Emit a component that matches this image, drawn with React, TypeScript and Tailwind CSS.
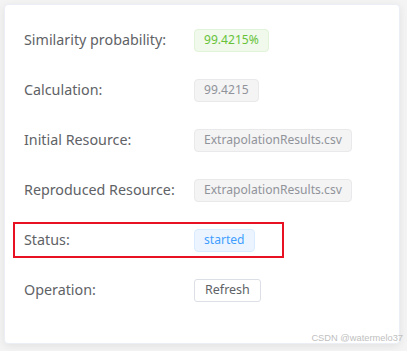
import React from "react";

type Tone = "success" | "info" | "primary";

const toneClass: Record<Tone, string> = {
  success: "bg-[#f0f9eb] border-[#e1f3d8] text-[#67c23a]",
  info: "bg-[#f4f4f5] border-[#e9e9eb] text-[#909399]",
  primary: "bg-[#ecf5ff] border-[#d9ecff] text-[#409eff]",
};

function Tag({ tone, children }: { tone: Tone; children: React.ReactNode }) {
  return (
    <span
      className={`inline-flex items-center h-[23px] px-[9px] rounded-[4px] border text-[12.1px] leading-none ${toneClass[tone]}`}
    >
      {children}
    </span>
  );
}

function Row({ label, children }: { label: string; children: React.ReactNode }) {
  return (
    <div className="flex items-center h-[50px]">
      <div className="w-[170px] text-[14.3px] text-[#606266]">{label}</div>
      {children}
    </div>
  );
}

export default function App() {
  return (
    <div
      className="relative w-[407px] h-[351px] bg-[#f4f4f4] p-[4px] pr-[7px]"
      style={{ fontFamily: '"Noto Sans", "Open Sans", sans-serif' }}
    >
      <div className="h-[340px] bg-white rounded-[4px] border border-[#ebeef5] shadow-[0_2px_8px_rgba(0,0,0,0.08)] pl-[19px] pt-[10px]">
        <Row label="Similarity probability:">
          <Tag tone="success">99.4215%</Tag>
        </Row>
        <Row label="Calculation:">
          <Tag tone="info">99.4215</Tag>
        </Row>
        <Row label="Initial Resource:">
          <Tag tone="info">ExtrapolationResults.csv</Tag>
        </Row>
        <Row label="Reproduced Resource:">
          <Tag tone="info">ExtrapolationResults.csv</Tag>
        </Row>
        <div className="flex items-center h-[36px] w-[271px] my-[7px] -ml-[11px] pl-[9px] border-2 border-[#e81123]">
          <div className="w-[170px] text-[14.3px] text-[#606266]">Status:</div>
          <Tag tone="primary">started</Tag>
        </div>
        <Row label="Operation:">
          <button className="h-[23px] px-[10px] rounded-[3px] border border-[#dcdfe6] bg-white text-[12.5px] text-[#606266] leading-none">
            Refresh
          </button>
        </Row>
      </div>
      <div
        className="absolute right-[4px] bottom-[8px] text-[9.3px] text-[#c0c0c0] leading-none"
        style={{ fontFamily: '"Liberation Sans", Arial, sans-serif' }}
      >
        CSDN @watermelo37
      </div>
    </div>
  );
}
